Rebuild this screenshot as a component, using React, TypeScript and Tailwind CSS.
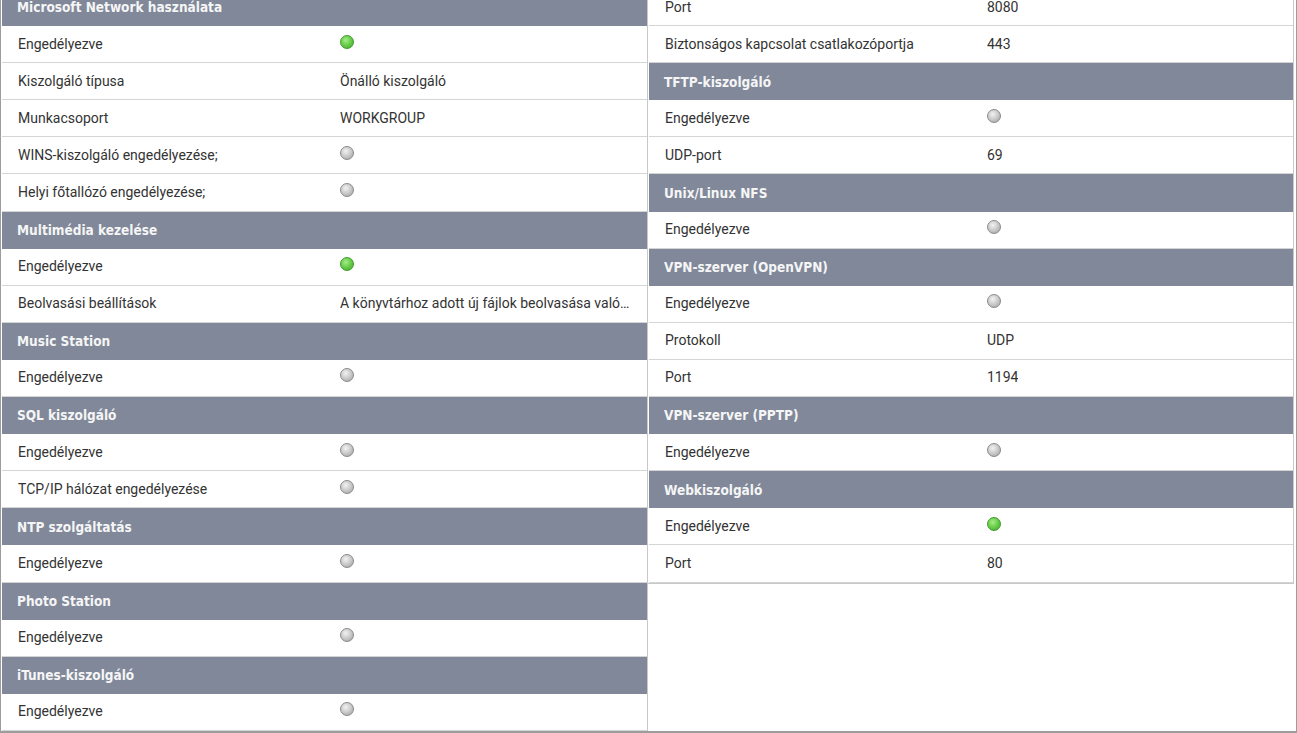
import type { ReactNode } from "react";

type Row =
  | { kind: "header"; title: string }
  | { kind: "row"; label: string; value?: string; dot?: "on" | "off" };

const left: Row[] = [
  { kind: "header", title: "Microsoft Network használata" },
  { kind: "row", label: "Engedélyezve", dot: "on" },
  { kind: "row", label: "Kiszolgáló típusa", value: "Önálló kiszolgáló" },
  { kind: "row", label: "Munkacsoport", value: "WORKGROUP" },
  { kind: "row", label: "WINS-kiszolgáló engedélyezése;", dot: "off" },
  { kind: "row", label: "Helyi főtallózó engedélyezése;", dot: "off" },
  { kind: "header", title: "Multimédia kezelése" },
  { kind: "row", label: "Engedélyezve", dot: "on" },
  {
    kind: "row",
    label: "Beolvasási beállítások",
    value: "A könyvtárhoz adott új fájlok beolvasása valós időben",
  },
  { kind: "header", title: "Music Station" },
  { kind: "row", label: "Engedélyezve", dot: "off" },
  { kind: "header", title: "SQL kiszolgáló" },
  { kind: "row", label: "Engedélyezve", dot: "off" },
  { kind: "row", label: "TCP/IP hálózat engedélyezése", dot: "off" },
  { kind: "header", title: "NTP szolgáltatás" },
  { kind: "row", label: "Engedélyezve", dot: "off" },
  { kind: "header", title: "Photo Station" },
  { kind: "row", label: "Engedélyezve", dot: "off" },
  { kind: "header", title: "iTunes-kiszolgáló" },
  { kind: "row", label: "Engedélyezve", dot: "off" },
];

const right: Row[] = [
  { kind: "row", label: "Port", value: "8080" },
  { kind: "row", label: "Biztonságos kapcsolat csatlakozóportja", value: "443" },
  { kind: "header", title: "TFTP-kiszolgáló" },
  { kind: "row", label: "Engedélyezve", dot: "off" },
  { kind: "row", label: "UDP-port", value: "69" },
  { kind: "header", title: "Unix/Linux NFS" },
  { kind: "row", label: "Engedélyezve", dot: "off" },
  { kind: "header", title: "VPN-szerver (OpenVPN)" },
  { kind: "row", label: "Engedélyezve", dot: "off" },
  { kind: "row", label: "Protokoll", value: "UDP" },
  { kind: "row", label: "Port", value: "1194" },
  { kind: "header", title: "VPN-szerver (PPTP)" },
  { kind: "row", label: "Engedélyezve", dot: "off" },
  { kind: "header", title: "Webkiszolgáló" },
  { kind: "row", label: "Engedélyezve", dot: "on" },
  { kind: "row", label: "Port", value: "80" },
];

const Dot = ({ on }: { on: boolean }) =>
  on ? (
    <span className="mb-[5px] inline-block h-[14px] w-[14px] rounded-full border border-[#3f9a2c] bg-[radial-gradient(circle_at_40%_35%,#a6ec8a_0%,#6ccf4c_45%,#3ea52a_100%)]" />
  ) : (
    <span className="mb-[5px] inline-block h-[14px] w-[14px] rounded-full border border-[#8a8a8a] bg-[radial-gradient(circle_at_40%_35%,#f2f2f2_0%,#c9c9c9_50%,#9d9d9d_100%)]" />
  );

const Header = ({ children }: { children: ReactNode }) => (
  <div className="flex h-[37.1px] items-center bg-[#80889a] pl-[15px] font-['DejaVu_Sans_Condensed','DejaVu_Sans',sans-serif] text-[13.5px] font-bold text-[#f5f5f5]">
    {children}
  </div>
);

const Table = ({ rows }: { rows: Row[] }) => (
  <div className="-mt-[11px]">
    {rows.map((r, i) =>
      r.kind === "header" ? (
        <Header key={i}>{r.title}</Header>
      ) : (
        <div
          key={i}
          className="flex h-[37.1px] items-center border-b border-[#d4d4d4] font-['Roboto',sans-serif] text-[14px] text-[#333333]"
        >
          <div className="w-[338px] shrink-0 pl-4">{r.label}</div>
          <div className="flex min-w-0 flex-1 items-center pr-4">
            {r.dot ? <Dot on={r.dot === "on"} /> : <span className="truncate">{r.value}</span>}
          </div>
        </div>
      )
    )}
  </div>
);

export default function App() {
  return (
    <div className="flex h-[733px] w-[1297px] items-start overflow-hidden border-x border-b-2 border-[#9c9c9c] bg-white pl-px">
      <div className="h-full w-[646px] shrink-0 border-r border-[#c8c8c8]">
        <Table rows={left} />
      </div>
      <div className="w-[646px] shrink-0 border-r border-b border-[#c8c8c8] pl-px">
        <Table rows={right} />
      </div>
    </div>
  );
}
